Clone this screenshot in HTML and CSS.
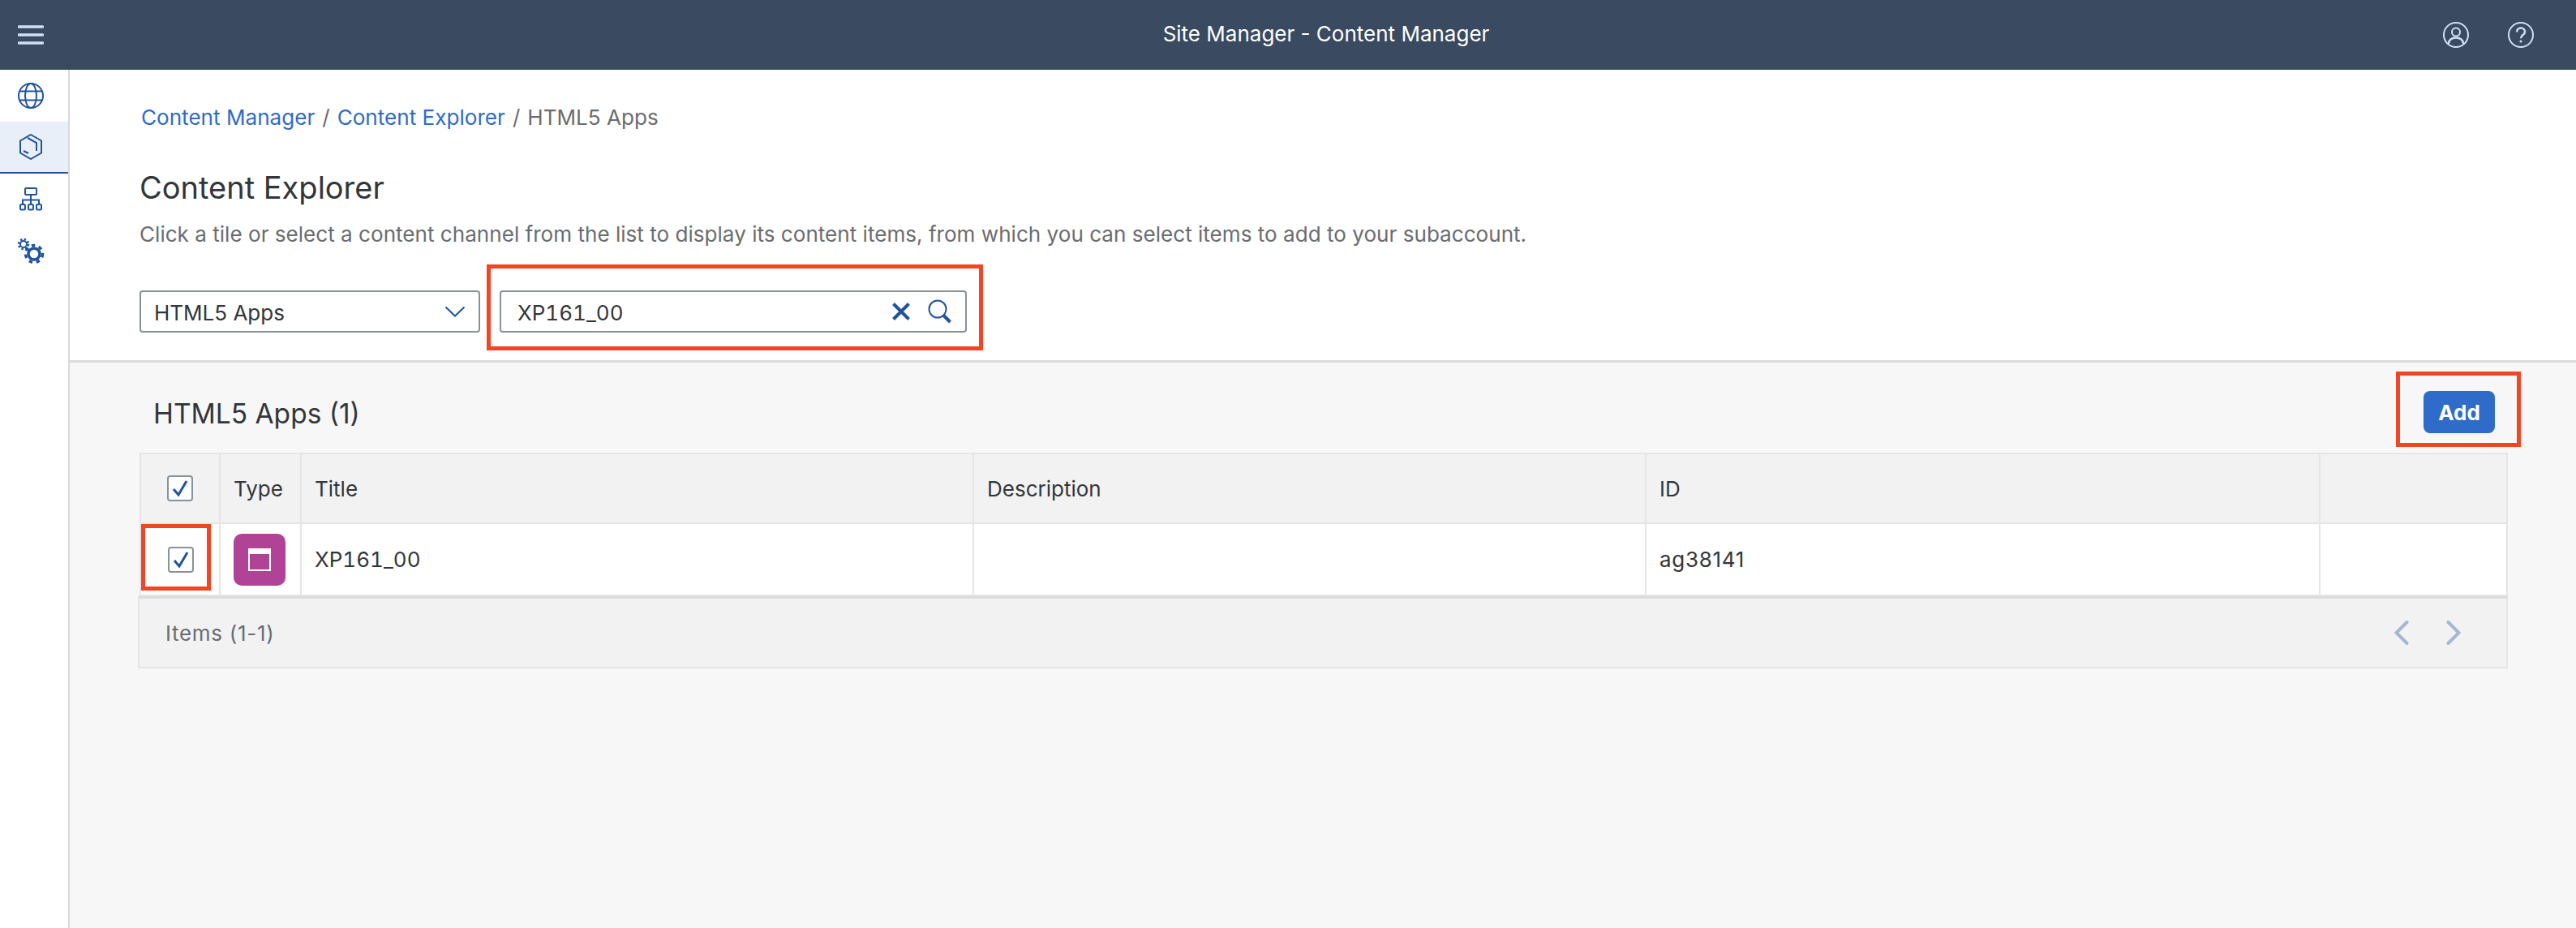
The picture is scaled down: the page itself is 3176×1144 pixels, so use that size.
FILE: index.html
```html
<!DOCTYPE html>
<html lang="en">
<head>
    <meta charset="UTF-8">
    <title>Site Manager - Content Manager</title>
    <link rel="stylesheet" href="styles.css">
</head>
<body>

    <header class="shell-bar">
        <svg class="shell-menu" width="32" height="24" viewBox="0 0 32 24">
            <path d="M1.500 2h29M1.500 12h29M1.500 22h29" />
        </svg>
        <div class="shell-title">Site Manager - Content Manager</div>
        <div class="shell-actions">
            <svg width="32" height="32" viewBox="0 0 32 32">
                <circle cx="16" cy="16" r="15" />
                <circle cx="16" cy="12.500" r="5" />
                <path d="M6.500 27c1-5 5-7.500 9.500-7.500s8.500 2.500 9.500 7.500" />
            </svg>
            <svg width="32" height="32" viewBox="0 0 32 32">
                <circle cx="16" cy="16" r="15" />
                <path d="M11 12.500c0-3 2.200-5 5-5s5 2 5 4.700c0 4-5 3.800-5 8" />
                <circle class="dot" cx="16" cy="24" r="1.600" />
            </svg>
        </div>
    </header>

    <div class="layout">
        <!-- Side navigation -->
        <nav class="side-nav">
            <div class="nav-item">
                <svg width="32" height="32" viewBox="0 0 32 32">
                    <circle cx="16" cy="16" r="15" />
                    <ellipse cx="16" cy="16" rx="7" ry="15" />
                    <path d="M2 10.500h28M2 21.500h28" />
                </svg>
            </div>
            <div class="nav-item selected">
                <svg width="32" height="32" viewBox="0 0 32 32">
                    <path d="M16 1l13 7.500v15L16 31 3 23.500v-15z" />
                    <path d="M12 5l11 6v10M7 21l6 3" />
                </svg>
            </div>
            <div class="nav-item">
                <svg width="32" height="32" viewBox="0 0 32 32">
                    <rect x="9" y="2" width="14" height="8" rx="1" />
                    <rect x="3" y="22" width="6" height="6.500" rx="1.500" />
                    <rect x="13" y="22" width="6" height="6.500" rx="1.500" />
                    <rect x="23" y="22" width="6" height="6.500" rx="1.500" />
                    <path d="M16 10v12M6 22v-5.500h20V22" />
                </svg>
            </div>
            <div class="nav-item">
                <svg width="34" height="34" viewBox="0 0 34 34">
                    <circle cx="8" cy="8" r="4" stroke-width="2" />
                    <circle cx="8" cy="8" r="6" stroke-width="2.500" stroke-dasharray="2.400 2.300" />
                    <circle cx="21" cy="20" r="7" stroke-width="3.500" />
                    <circle cx="21" cy="20" r="10.500" stroke-width="3.500" stroke-dasharray="4.400 4.800" />
                </svg>
            </div>
        </nav>

        <main class="content">
            <section class="page-head">
                <div class="breadcrumb">
                    <a href="#">Content Manager</a>
                    <span class="sep">/</span>
                    <a href="#">Content Explorer</a>
                    <span class="sep">/</span>
                    <span>HTML5 Apps</span>
                </div>
                <h1>Content Explorer</h1>
                <p class="hint">Click a tile or select a content channel from the list to display its content items, from which you can select items to add to your subaccount.</p>

                <div class="filters">
                    <div class="field select-field">
                        <span>HTML5 Apps</span>
                        <svg width="26" height="14" viewBox="0 0 26 14">
                            <path d="M1.500 1.500L13 12.500 24.500 1.500" />
                        </svg>
                    </div>
                    <div class="field search-field">
                        <span class="code">XP161_00</span>
                        <div class="field-icons">
                            <svg width="24" height="24" viewBox="0 0 24 24">
                                <path class="bold" d="M2.500 2.500l19 19M21.500 2.500l-19 19" />
                            </svg>
                            <svg width="30" height="30" viewBox="0 0 30 30">
                                <circle cx="12" cy="12" r="10.500" />
                                <path class="bold" d="M19.500 20l8 8" />
                            </svg>
                        </div>
                        <div class="callout callout-search"></div>
                    </div>
                </div>
            </section>

            <section class="results">
                <div class="results-bar">
                    <h2>HTML5 Apps (1)</h2>
                    <button class="add-button">Add<span class="callout callout-add"></span></button>
                </div>

                <table class="items">
                    <colgroup>
                        <col class="col-check">
                        <col class="col-type">
                        <col class="col-title">
                        <col class="col-desc">
                        <col class="col-id">
                        <col>
                    </colgroup>
                    <thead>
                        <tr>
                            <th class="check-cell">
                                <span class="checkbox">
                                    <svg width="22" height="22" viewBox="0 0 22 22"><path d="M3 12l6 7L19 2" /></svg>
                                </span>
                            </th>
                            <th>Type</th>
                            <th>Title</th>
                            <th>Description</th>
                            <th>ID</th>
                            <th></th>
                        </tr>
                    </thead>
                    <tbody>
                        <tr>
                            <td class="check-cell">
                                <span class="checkbox row-box">
                                    <svg width="22" height="22" viewBox="0 0 22 22"><path d="M3 12l6 7L19 2" /></svg>
                                </span>
                                <div class="callout callout-row"></div>
                            </td>
                            <td>
                                <span class="type-tile">
                                    <svg width="28" height="28" viewBox="0 0 28 28">
                                        <rect x="1" y="1" width="26" height="26" />
                                        <path class="band" d="M0 0h28v7H0z" />
                                    </svg>
                                </span>
                            </td>
                            <td class="code">XP161_00</td>
                            <td></td>
                            <td class="spaced">ag38141</td>
                            <td></td>
                        </tr>
                    </tbody>
                </table>

                <div class="items-footer">
                    <span class="spaced">Items (1-1)</span>
                    <div class="pager">
                        <svg width="18" height="30" viewBox="0 0 18 30"><path d="M15.500 2L2.500 15l13 13" /></svg>
                        <svg width="18" height="30" viewBox="0 0 18 30"><path d="M2.500 2l13 13-13 13" /></svg>
                    </div>
                </div>
            </section>
        </main>
    </div>

</body>
</html>
```

FILE: styles.css
```css
:root {
    --shell-color: #3a4a60;
    --shell-icon: #d1e0f5;
    --blue: #2f6bc9;
    --icon-blue: #20539f;
    --text-color: #32363a;
    --muted: #6a6d70;
    --border-color: #e5e5e5;
    --callout: #f04626;
}

body {
    margin: 0;
    width: 3176px;
    height: 1144px;
    overflow: hidden;
    background: white;
    color: var(--text-color);
    font-family: Inter, "Noto Sans", Arial, sans-serif;
}

svg {
    display: block;
    fill: none;
    stroke: var(--icon-blue);
    stroke-width: 2;
}

.code {
    font-variant-numeric: tabular-nums;
}

.spaced {
    letter-spacing: 0.7px;
}

/* Shell bar */
.shell-bar {
    height: 86px;
    background: var(--shell-color);
    display: grid;
    grid-template-columns: 1fr auto 1fr;
    align-items: center;
    padding: 0 52px 0 22px;
}

.shell-bar svg {
    stroke: var(--shell-icon);
}

.shell-menu path {
    stroke-width: 3.500;
    stroke-linecap: round;
}

.shell-title {
    color: white;
    font-size: 26px;
    padding: 0 0 3px 124px;
}

.shell-actions {
    display: flex;
    justify-content: flex-end;
    gap: 48px;
}

.shell-actions .dot {
    fill: var(--shell-icon);
    stroke: none;
}

.shell-actions path {
    stroke-width: 2.500;
}

/* Side navigation */
.layout {
    display: flex;
    height: 1058px;
}

.side-nav {
    width: 84px;
    border-right: 2px solid #d9d9d9;
    flex: none;
}

.nav-item {
    height: 64px;
    padding-right: 8px;
    display: flex;
    align-items: center;
    justify-content: center;
}

.nav-item.selected {
    height: 62px;
    background: #e8eff8;
    border-bottom: 2px solid var(--icon-blue);
}

/* Page head */
.content {
    flex: 1;
    display: flex;
    flex-direction: column;
}

.page-head {
    height: 361px;
    padding: 42px 0 0 86px;
    box-sizing: border-box;
    border-bottom: 3px solid #dcdcdc;
}

.breadcrumb {
    display: flex;
    gap: 9px;
    padding-left: 2px;
    font-size: 26.100px;
    line-height: 34px;
    color: var(--muted);
}

.breadcrumb a {
    color: var(--blue);
    text-decoration: none;
}

h1 {
    margin: 46px 0 0;
    font-size: 38px;
    line-height: 46px;
    font-weight: 400;
}

.hint {
    margin: 18px 0 0;
    font-size: 26.100px;
    line-height: 34px;
    color: var(--muted);
}

.filters {
    display: flex;
    gap: 24px;
    margin-top: 52px;
}

.field {
    height: 52px;
    box-sizing: border-box;
    border: 2px solid #89919a;
    border-radius: 4px;
    display: flex;
    align-items: center;
    justify-content: space-between;
    font-size: 26px;
    position: relative;
}

.field > span {
    padding-top: 2px;
}

.select-field {
    width: 420px;
    padding: 0 16px;
}

.search-field {
    width: 576px;
    padding: 0 16px 0 20px;
}

.field-icons {
    display: flex;
    align-items: center;
    gap: 21px;
}

.bold {
    stroke-width: 4;
}

/* Red annotation boxes */
.callout {
    position: absolute;
    border: 5px solid var(--callout);
    box-sizing: border-box;
}

.callout-search {
    left: -18px;
    right: -22px;
    top: -34px;
    bottom: -24px;
}

.callout-add {
    left: -34px;
    right: -32px;
    top: -24px;
    bottom: -17px;
}

.callout-row {
    left: 0;
    top: 0;
    width: 86px;
    height: 82px;
}

/* Results */
.results {
    flex: 1;
    background: #f7f7f7;
    padding: 0 84px 0 86px;
}

.results-bar {
    height: 111px;
    display: flex;
    align-items: center;
    justify-content: space-between;
    padding: 0 16px 0 17px;
}

h2 {
    margin: 14px 0 0;
    font-size: 33.500px;
    font-weight: 400;
}

.add-button {
    width: 88px;
    height: 52px;
    margin-top: 11px;
    background: var(--blue);
    color: white;
    border: none;
    border-radius: 8px;
    font-family: inherit;
    font-size: 26px;
    font-weight: 700;
    position: relative;
    padding: 0;
}

.items {
    width: 100%;
    table-layout: fixed;
    border-collapse: collapse;
    font-size: 26px;
}

.col-check { width: 98px; }
.col-type { width: 100px; }
.col-title { width: 829px; }
.col-desc { width: 829px; }
.col-id { width: 831px; }

.items th,
.items td {
    border: 2px solid var(--border-color);
    padding: 0 16px;
    text-align: left;
    font-weight: 400;
    box-sizing: border-box;
}

.items th {
    height: 86px;
    background: #f2f2f2;
}

.items td {
    height: 89px;
    background: white;
}

.items .check-cell {
    padding: 0 0 0 32px;
    position: relative;
}

.checkbox {
    width: 32px;
    height: 32px;
    box-sizing: border-box;
    background: white;
    border: 2px solid #89919a;
    border-radius: 4px;
    display: flex;
    align-items: center;
    justify-content: center;
}

.checkbox svg {
    stroke-width: 3;
}

.row-box {
    margin-left: 1px;
}

.type-tile {
    width: 64px;
    height: 64px;
    background: #b04395;
    border-radius: 10px;
    display: flex;
    align-items: center;
    justify-content: center;
}

.type-tile svg {
    stroke: white;
}

.type-tile .band {
    fill: white;
    stroke: none;
}

.items-footer {
    height: 89px;
    margin-left: -2px;
    background: #f2f2f2;
    border: 2px solid var(--border-color);
    border-top: 3px solid #dcdcdc;
    box-sizing: border-box;
    display: flex;
    align-items: center;
    justify-content: space-between;
    padding: 0 56px 0 32px;
    font-size: 26px;
    color: var(--muted);
}

.pager {
    display: flex;
    gap: 46px;
}

.pager svg {
    stroke: #a4b7d6;
    stroke-width: 4;
    stroke-linecap: round;
}
```
